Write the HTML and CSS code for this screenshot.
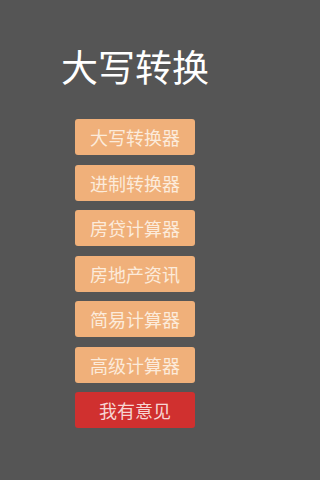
FILE: index.html
```html
<!DOCTYPE html>
<html lang="zh">
<head>
<meta charset="utf-8">
<link rel="stylesheet" href="styles.css">
</head>
<body>
<div class="page">
  <h1 class="title">大写转换</h1>
  <div class="menu">
    <div class="btn">大写转换器</div>
    <div class="btn">进制转换器</div>
    <div class="btn">房贷计算器</div>
    <div class="btn">房地产资讯</div>
    <div class="btn">简易计算器</div>
    <div class="btn">高级计算器</div>
    <div class="btn btn-red">我有意见</div>
  </div>
</div>
</body>
</html>
```
FILE: styles.css
```css
html, body {
  margin: 0;
  padding: 0;
  background: #555555;
}
.page {
  width: 270px;
  height: 480px;
  display: flex;
  flex-direction: column;
  align-items: center;
  font-family: "Noto Sans CJK SC", "Noto Sans", sans-serif;
}
.title {
  margin: 48px 0 0 0;
  font-size: 37px;
  line-height: 37px;
  font-weight: 400;
  color: #ffffff;
}
.menu {
  margin-top: 34px;
  display: flex;
  flex-direction: column;
  gap: 9.5px;
}
.btn {
  width: 120px;
  height: 36px;
  border-radius: 3px;
  background: #f0b07a;
  color: #fcebdb;
  font-size: 18px;
  line-height: 36px;
  text-align: center;
}
.btn-red {
  background: #d0302f;
  color: #f6d6d4;
}
```
